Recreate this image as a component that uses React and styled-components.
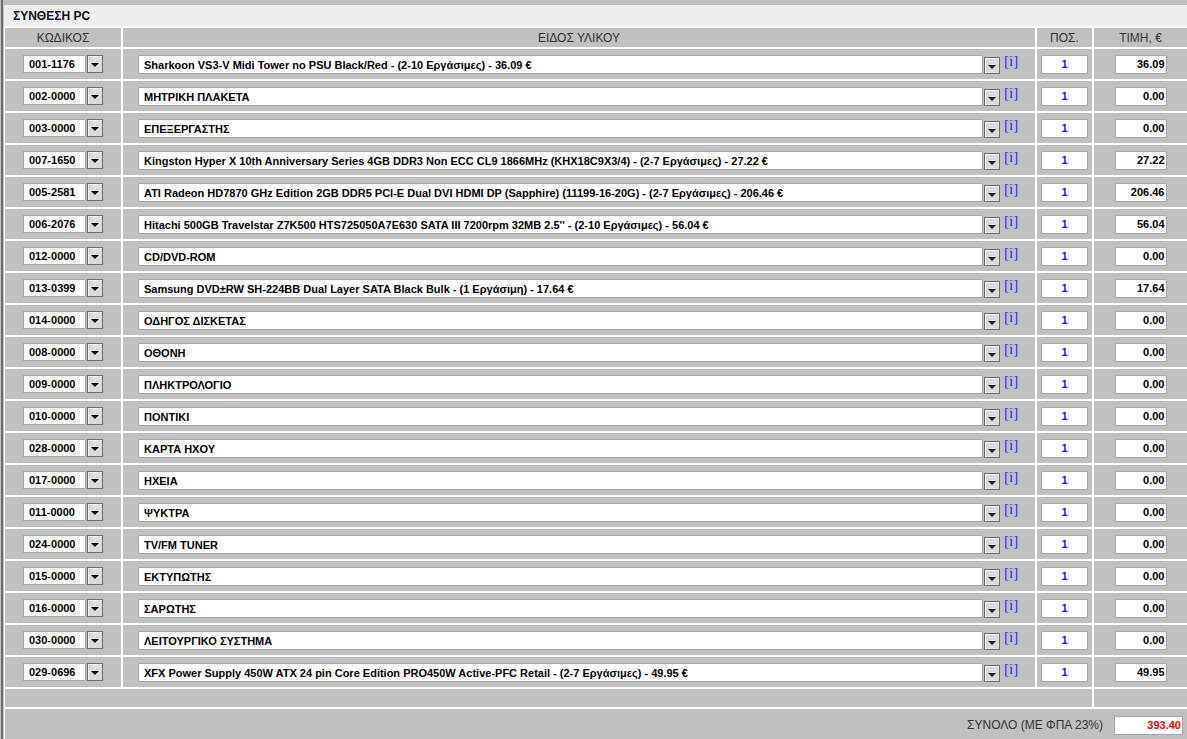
import React from 'react'
import styled, { createGlobalStyle } from 'styled-components'

const GlobalStyle = createGlobalStyle`
  html, body {
    margin: 0;
    padding: 0;
    background: #c0c0c0;
    overflow: hidden;
  }
  body {
    font-family: "Liberation Sans", Arial, sans-serif;
  }
`

const Frame = styled.div`
  margin-left: 1px;
  border-left: 2px solid #6e6e6e;
  padding: 5px 0 0 1px;
  min-height: 739px;
  box-sizing: border-box;
`

const TitleBar = styled.div`
  height: 21px;
  background: #eeeeee;
  display: flex;
  align-items: center;
  padding-left: 9px;
  font-size: 12px;
  font-weight: bold;
  color: #111122;
`

const TableWrap = styled.div`
  overflow: hidden;
`

const Table = styled.table`
  margin-left: -1px;
  width: 1186px;
  table-layout: fixed;
  border-collapse: separate;
  border-spacing: 2px;
  background: #ffffff;
`

const HeadCell = styled.th`
  width: ${(p) => p.$w}px;
  height: 19px;
  padding: 0;
  background: #c0c0c0;
  font-size: 12px;
  font-weight: normal;
  color: #333333;
  text-align: center;
`

const Cell = styled.td`
  height: ${(p) => p.$h || 30}px;
  padding: 0;
  background: #c0c0c0;
`

const CellInner = styled.div`
  display: flex;
  align-items: center;
  justify-content: center;
`

const Field = styled.div`
  box-sizing: border-box;
  width: ${(p) => p.$w}px;
  height: ${(p) => p.$h || 19}px;
  background: #ffffff;
  border: 1px solid #a4a4a4;
  display: flex;
  align-items: center;
  justify-content: ${(p) => p.$justify || 'flex-start'};
  padding: 0 ${(p) => (p.$justify === 'flex-end' ? '1px' : '0')} 0 ${(p) => (p.$justify ? '0' : '5px')};
  font-size: 11px;
  font-weight: bold;
  color: ${(p) => p.$color || '#000000'};
  white-space: nowrap;
  overflow: hidden;
`

const DropButton = styled.div`
  box-sizing: border-box;
  width: 16px;
  height: ${(p) => p.$h || 18}px;
  border: 1px solid #6c6c6c;
  background: #dcdcdc;
  box-shadow: inset 1px 1px 0 #f4f4f4;
  display: flex;
  align-items: center;
  justify-content: center;
  padding-top: 2px;

  &::after {
    content: '';
    width: 0;
    height: 0;
    border-left: 4px solid transparent;
    border-right: 4px solid transparent;
    border-top: 4px solid #000000;
  }
`

const SelectGroup = styled.div`
  display: flex;
  align-items: ${(p) => p.$align || 'center'};
  gap: 1px;
`

const InfoLink = styled.a`
  margin-left: 4px;
  margin-top: -1px;
  align-self: flex-start;
  font-family: "Liberation Serif", "Times New Roman", serif;
  font-size: 15px;
  line-height: 15px;
  color: #2b2bff;
  text-decoration: none;
`

const DescRow = styled.div`
  display: flex;
  align-items: center;
  padding-left: 15px;
  padding-top: 1px;
`

const TotalCell = styled.td`
  padding: 0;
  background: #c0c0c0;
`

const TotalInner = styled.div`
  height: 32px;
  display: flex;
  align-items: center;
  justify-content: flex-end;
  gap: 11px;
  padding-right: 4px;
  font-size: 12px;
  color: #333333;
`

const items = [
  ['001-1176', 'Sharkoon VS3-V Midi Tower no PSU Black/Red - (2-10 Εργάσιμες) - 36.09 €', '36.09'],
  ['002-0000', 'ΜΗΤΡΙΚΗ ΠΛΑΚΕΤΑ', '0.00'],
  ['003-0000', 'ΕΠΕΞΕΡΓΑΣΤΗΣ', '0.00'],
  ['007-1650', 'Kingston Hyper X 10th Anniversary Series 4GB DDR3 Non ECC CL9 1866MHz (KHX18C9X3/4) - (2-7 Εργάσιμες) - 27.22 €', '27.22'],
  ['005-2581', 'ATI Radeon HD7870 GHz Edition 2GB DDR5 PCI-E Dual DVI HDMI DP (Sapphire) (11199-16-20G) - (2-7 Εργάσιμες) - 206.46 €', '206.46'],
  ['006-2076', "Hitachi 500GB Travelstar Z7K500 HTS725050A7E630 SATA III 7200rpm 32MB 2.5'' - (2-10 Εργάσιμες) - 56.04 €", '56.04'],
  ['012-0000', 'CD/DVD-ROM', '0.00'],
  ['013-0399', 'Samsung DVD±RW SH-224BB Dual Layer SATA Black Bulk - (1 Εργάσιμη) - 17.64 €', '17.64'],
  ['014-0000', 'ΟΔΗΓΟΣ ΔΙΣΚΕΤΑΣ', '0.00'],
  ['008-0000', 'ΟΘΟΝΗ', '0.00'],
  ['009-0000', 'ΠΛΗΚΤΡΟΛΟΓΙΟ', '0.00'],
  ['010-0000', 'ΠΟΝΤΙΚΙ', '0.00'],
  ['028-0000', 'ΚΑΡΤΑ ΗΧΟΥ', '0.00'],
  ['017-0000', 'ΗΧΕΙΑ', '0.00'],
  ['011-0000', 'ΨΥΚΤΡΑ', '0.00'],
  ['024-0000', 'TV/FM TUNER', '0.00'],
  ['015-0000', 'ΕΚΤΥΠΩΤΗΣ', '0.00'],
  ['016-0000', 'ΣΑΡΩΤΗΣ', '0.00'],
  ['030-0000', 'ΛΕΙΤΟΥΡΓΙΚΟ ΣΥΣΤΗΜΑ', '0.00'],
  ['029-0696', 'XFX Power Supply 450W ATX 24 pin Core Edition PRO450W Active-PFC Retail - (2-7 Εργάσιμες) - 49.95 €', '49.95'],
]

const ItemRow = ({ code, name, price }) => (
  <tr>
    <Cell>
      <CellInner>
        <SelectGroup>
          <Field $w={63} $h={18}>{code}</Field>
          <DropButton />
        </SelectGroup>
      </CellInner>
    </Cell>
    <Cell>
      <DescRow>
        <SelectGroup $align="flex-end">
          <Field $w={845}>{name}</Field>
          <DropButton $h={17} />
        </SelectGroup>
        <InfoLink href="#">[i]</InfoLink>
      </DescRow>
    </Cell>
    <Cell>
      <CellInner>
        <Field $w={47} $justify="center" $color="#1010f0">1</Field>
      </CellInner>
    </Cell>
    <Cell>
      <CellInner>
        <Field $w={52} $justify="flex-end">{price}</Field>
      </CellInner>
    </Cell>
  </tr>
)

export default function App() {
  return (
    <>
      <GlobalStyle />
      <Frame>
        <TitleBar>ΣΥΝΘΕΣΗ PC</TitleBar>
        <TableWrap>
          <Table>
            <thead>
              <tr>
                <HeadCell $w={116}>ΚΩΔΙΚΟΣ</HeadCell>
                <HeadCell $w={912}>ΕΙΔΟΣ ΥΛΙΚΟΥ</HeadCell>
                <HeadCell $w={55}>ΠΟΣ.</HeadCell>
                <HeadCell $w={93}>ΤΙΜΗ, €</HeadCell>
              </tr>
            </thead>
            <tbody>
              {items.map(([code, name, price]) => (
                <ItemRow key={code} code={code} name={name} price={price} />
              ))}
              <tr>
                <Cell colSpan={3} $h={18} />
                <Cell $h={18} />
              </tr>
              <tr>
                <TotalCell colSpan={4}>
                  <TotalInner>
                    ΣΥΝΟΛΟ (ΜΕ ΦΠΑ 23%)
                    <Field $w={69} $h={19} $justify="flex-end" $color="#ff0000">
                      393.40
                    </Field>
                  </TotalInner>
                </TotalCell>
              </tr>
            </tbody>
          </Table>
        </TableWrap>
      </Frame>
    </>
  )
}
